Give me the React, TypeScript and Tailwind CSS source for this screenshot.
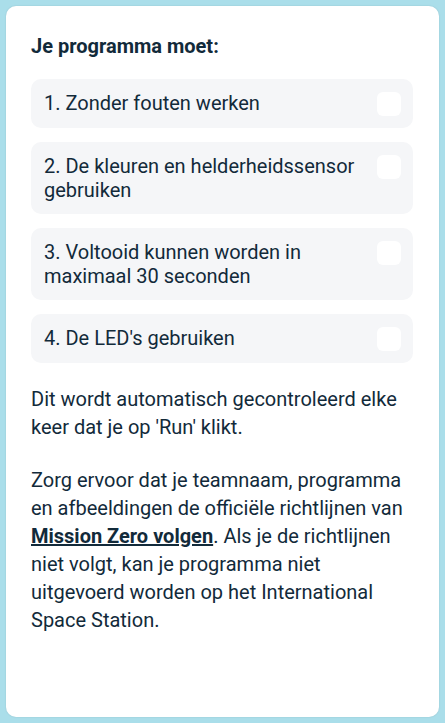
import React from 'react';

const items = [
  '1. Zonder fouten werken',
  '2. De kleuren en helderheidssensor gebruiken',
  '3. Voltooid kunnen worden in maximaal 30 seconden',
  "4. De LED's gebruiken",
];

export default function App() {
  return (
    <div
      className="min-h-screen bg-[#aadeea] p-[6px] text-[#122a3a]"
      style={{ fontFamily: 'Roboto, "Noto Sans", sans-serif' }}
    >
      <div className="h-[711px] rounded-[10px] bg-white pl-[25px] pr-[26px] pt-[26px] shadow-[0_0_2px_rgba(0,0,0,0.12)]">
        <h2 className="text-[20px] font-bold leading-[28px]">Je programma moet:</h2>

        <ul className="mt-[19px] flex flex-col gap-[14px]">
          {items.map((t) => (
            <li
              key={t}
              className="flex items-start justify-between gap-3 rounded-[10px] bg-[#f5f6f8] py-[12px] pl-[13px] pr-[12px]"
            >
              <span className="text-[20px] leading-[24px]">{t}</span>
              <span className="mt-[1px] h-[24px] w-[24px] shrink-0 rounded-[6px] bg-white" />
            </li>
          ))}
        </ul>

        <div className="mt-[22px] text-[20px] leading-[28px]">
          <p className="mb-[25px]">
            Dit wordt automatisch gecontroleerd elke keer dat je op 'Run' klikt.
          </p>
          <p>
            Zorg ervoor dat je teamnaam, programma en afbeeldingen de officiële richtlijnen van{' '}
            <a href="#" className="font-bold underline">
              Mission Zero volgen
            </a>
            . Als je de richtlijnen niet volgt, kan je programma niet uitgevoerd worden op het
            International Space Station.
          </p>
        </div>
      </div>
    </div>
  );
}
